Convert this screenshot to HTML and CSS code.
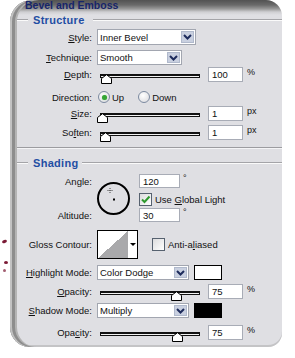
FILE: index.html
```html
<!DOCTYPE html>
<html>
<head>
<meta charset="utf-8">
<link rel="stylesheet" href="styles.css">
</head>
<body>
<div class="gutter">
  <span class="mark mark1"></span>
  <span class="mark mark2"></span>
  <span class="mark mark3"></span>
</div>
<div class="frame">
  <div class="title">Bevel and Emboss</div>

  <div class="legend"><span class="lead"></span><span class="ltext structure">Structure</span><span class="rest"></span></div>

  <div class="row r-style">
    <div class="lbl"><u>S</u>tyle:</div>
    <div class="select w-style"><span class="val">Inner Bevel</span><span class="btn"><svg width="9" height="6" viewBox="0 0 9 6"><path d="M1 1l3.5 3.5L8 1" fill="none" stroke="#1d2b5c" stroke-width="2"/></svg></span></div>
  </div>
  <div class="row r-tech">
    <div class="lbl"><u>T</u>echnique:</div>
    <div class="select w-tech"><span class="val">Smooth</span><span class="btn"><svg width="9" height="6" viewBox="0 0 9 6"><path d="M1 1l3.5 3.5L8 1" fill="none" stroke="#1d2b5c" stroke-width="2"/></svg></span></div>
  </div>
  <div class="row r-depth">
    <div class="lbl"><u>D</u>epth:</div>
    <div class="slider"><div class="track"></div><svg class="thumb" style="left:1px" width="11" height="10" viewBox="0 0 11 10"><path d="M0.5 4.5L5.5 0.7L10.5 4.5V9.5H0.5Z" fill="#fff" stroke="#000"/></svg></div>
    <div class="num">100</div><span class="unit">%</span>
  </div>
  <div class="row r-dir">
    <div class="lbl">Direction:</div>
    <span class="radio on"></span><span class="rtext">Up</span>
    <span class="radio r2"></span><span class="rtext">Down</span>
  </div>
  <div class="row r-size">
    <div class="lbl"><u>S</u>ize:</div>
    <div class="slider"><div class="track"></div><svg class="thumb" style="left:-3px" width="11" height="10" viewBox="0 0 11 10"><path d="M0.5 4.5L5.5 0.7L10.5 4.5V9.5H0.5Z" fill="#fff" stroke="#000"/></svg></div>
    <div class="num">1</div><span class="unit">px</span>
  </div>
  <div class="row r-soft">
    <div class="lbl">So<u>f</u>ten:</div>
    <div class="slider"><div class="track"></div><svg class="thumb" style="left:0px" width="11" height="10" viewBox="0 0 11 10"><path d="M0.5 4.5L5.5 0.7L10.5 4.5V9.5H0.5Z" fill="#fff" stroke="#000"/></svg></div>
    <div class="num">1</div><span class="unit">px</span>
  </div>

  <div class="sep"></div>

  <div class="legend l-shade"><span class="lead"></span><span class="ltext">Shading</span><span class="rest"></span></div>

  <div class="angle">
    <div class="lbl a1">An<u>g</u>le:</div>
    <div class="lbl a2">Altitude:</div>
    <svg class="dial" width="33" height="33" viewBox="0 0 33 33">
      <circle cx="16.5" cy="16.5" r="15.5" fill="none" stroke="#000" stroke-width="2"/>
      <rect x="16" y="16.5" width="2" height="2" fill="#000"/>
      <path d="M10.5 8.5h5M13 6v5" stroke="#444" stroke-width="1" stroke-dasharray="1 1"/>
    </svg>
    <div class="arow ar1"><div class="num n-ang">120</div><span class="deg">°</span></div>
    <div class="arow ar2"><span class="check"><svg width="11" height="11" viewBox="0 0 11 11"><path d="M2 5.5l2.5 2.5L9.5 2.5" fill="none" stroke="#2f9a2f" stroke-width="2"/></svg></span><span class="ctext">Use <u>G</u>lobal Light</span></div>
    <div class="arow ar3"><div class="num n-ang">30</div><span class="deg">°</span></div>
  </div>

  <div class="row r-gloss">
    <div class="lbl">Gloss Contour:</div>
    <div class="contour"><span class="curve"></span><span class="carrow"><svg width="6" height="3" viewBox="0 0 6 3"><path d="M0 0H6L3 3Z" fill="#000"/></svg></span></div>
    <span class="check c-aa"></span><span class="ctext">Anti-a<u>l</u>iased</span>
  </div>

  <div class="row r-hl">
    <div class="lbl"><u>H</u>ighlight Mode:</div>
    <div class="select w-mode"><span class="val">Color Dodge</span><span class="btn"><svg width="9" height="6" viewBox="0 0 9 6"><path d="M1 1l3.5 3.5L8 1" fill="none" stroke="#1d2b5c" stroke-width="2"/></svg></span></div>
    <span class="swatch white"></span>
  </div>
  <div class="row r-op1">
    <div class="lbl"><u>O</u>pacity:</div>
    <div class="slider"><div class="track"></div><svg class="thumb" style="left:71px" width="11" height="10" viewBox="0 0 11 10"><path d="M0.5 4.5L5.5 0.7L10.5 4.5V9.5H0.5Z" fill="#fff" stroke="#000"/></svg></div>
    <div class="num">75</div><span class="unit">%</span>
  </div>
  <div class="row r-sh">
    <div class="lbl"><u>S</u>hadow Mode:</div>
    <div class="select w-mode"><span class="val">Multiply</span><span class="btn"><svg width="9" height="6" viewBox="0 0 9 6"><path d="M1 1l3.5 3.5L8 1" fill="none" stroke="#1d2b5c" stroke-width="2"/></svg></span></div>
    <span class="swatch black"></span>
  </div>
  <div class="row r-op2">
    <div class="lbl">Opa<u>c</u>ity:</div>
    <div class="slider"><div class="track"></div><svg class="thumb" style="left:72px" width="11" height="10" viewBox="0 0 11 10"><path d="M0.5 4.5L5.5 0.7L10.5 4.5V9.5H0.5Z" fill="#fff" stroke="#000"/></svg></div>
    <div class="num">75</div><span class="unit">%</span>
  </div>
</div>
</body>
</html>
```
FILE: styles.css
```css
* { box-sizing: border-box; }
html, body { margin: 0; background: #fff; }
body {
  display: flex;
  width: 295px;
  height: 358px;
  overflow: hidden;
  font-family: "Liberation Sans", Arial, sans-serif;
  font-size: 9.5px;
  color: #111;
}
u { text-decoration: underline; text-underline-offset: 1px; }

.gutter { width: 10px; flex: none; }
.mark { display: block; background: #7b1a35; border-radius: 50%; }
.mark1 { width: 5px; height: 3px; margin: 240px 0 0 2px; transform: rotate(-20deg); }
.mark2 { width: 4px; height: 3px; margin: 18px 0 0 4px; }
.mark3 { width: 3px; height: 3px; margin: 5px 0 0 3px; opacity: 0.7; }

.frame {
  width: 272px;
  height: 347px;
  flex: none;
  border-radius: 22px 16px 14px 20px;
  background: linear-gradient(to bottom, #525252 0, #6a6a6a 5px, #9a9a9a 9px, #cfcfd2 12px, #dfdfe3 15px);
  box-shadow: inset 2px 0 0 #c2c2c2, inset 5px 0 0 #8d8d8d, inset 7px 0 0 #b4b4b4, inset 0 -2px 0 #c4c4c6;
  padding-left: 7px;
  overflow: hidden;
}

.title {
  height: 14px;
  padding-left: 8px;
  font-weight: bold;
  font-size: 10.5px;
  line-height: 11px;
  color: #17256a;
  white-space: nowrap;
}

.legend { display: flex; align-items: center; height: 12px; }
.legend .lead { width: 11px; }
.legend .lead, .legend .rest { height: 2px; border-top: 1px solid #a4a4a8; border-bottom: 1px solid #fafafa; }
.legend .rest { flex: 1; }
.ltext {
  padding: 0 8px 0 5px;
  font-weight: bold;
  font-size: 11px;
  letter-spacing: 0.3px;
  color: #1f4ea3;
}
.l-shade { margin-top: 8px; }
.l-shade .ltext { padding-right: 3px; }

.row { display: flex; align-items: center; height: 16px; }
.lbl { width: 75px; flex: none; margin-right: 5px; text-align: right; white-space: nowrap; }

.r-style { margin-top: 3px; }
.r-tech { margin-top: 5px; height: 15px; }
.r-depth { margin-top: 2px; height: 15px; }
.r-dir { margin-top: 7px; }
.r-size { margin-top: 1px; height: 15px; }
.r-soft { margin-top: 4px; height: 15px; }

.select {
  display: flex;
  height: 100%;
  background: #fff;
  border: 1px solid #a2a6b0;
  padding: 1px;
}
.select .val { flex: 1; display: flex; align-items: center; padding-left: 1px; white-space: nowrap; }
.btn {
  width: 13px;
  flex: none;
  background: #c9d0e0;
  border: 1px solid #b0b9cc;
  display: flex;
  align-items: center;
  justify-content: center;
}
.w-style { width: 99px; }
.w-tech { width: 85px; }
.w-mode { width: 92px; }

.slider { position: relative; width: 100px; height: 100%; margin-left: 3px; flex: none; }
.track { margin-top: 7px; height: 4px; background: #f2f2f2; border: 1px solid #111; border-top-width: 2px; }
.thumb { position: absolute; top: 7px; }

.num {
  width: 35px;
  height: 15px;
  flex: none;
  margin-left: 8px;
  background: #fff;
  border: 1px solid #a8acb6;
  padding-left: 3px;
  display: flex;
  align-items: center;
}
.unit { margin-left: 4px; align-self: flex-start; font-size: 9px; line-height: 10px; }

.radio {
  width: 12px;
  height: 12px;
  flex: none;
  border-radius: 50%;
  border: 1px solid #7c8aa0;
  background: radial-gradient(circle at 40% 35%, #fff, #d8d8dc);
  display: flex;
  align-items: center;
  justify-content: center;
  margin-left: 1px;
}
.radio.on::after { content: ""; width: 5px; height: 5px; border-radius: 50%; background: #35a535; box-shadow: 0 0 1px #7c7; }
.radio.r2 { margin-left: 14px; }
.rtext { margin-left: 2px; }

.sep { margin-top: 7px; height: 2px; border-top: 1px solid #9c9ca0; border-bottom: 1px solid #f4f4f6; }

.angle {
  display: grid;
  grid-template-columns: 80px 42px auto;
  grid-template-rows: 14px 20px 14px;
  margin-top: 5px;
}
.angle .lbl { display: flex; align-items: center; justify-content: flex-end; }
.a1 { grid-column: 1; grid-row: 1; }
.a2 { grid-column: 1; grid-row: 3; }
.dial { grid-column: 2; grid-row: 1 / 4; align-self: center; }
.arow { grid-column: 3; display: flex; align-items: center; }
.ar1 { grid-row: 1; }
.ar2 { grid-row: 2; align-self: end; margin-bottom: 2px; }
.ar3 { grid-row: 3; }
.n-ang { width: 41px; height: 14px; margin-left: 0; }
.deg { align-self: flex-start; margin-left: 3px; font-size: 9px; line-height: 8px; }

.check {
  width: 13px;
  height: 13px;
  flex: none;
  border: 1px solid #56616f;
  background: linear-gradient(135deg, #dcdcde, #fff);
  display: flex;
  align-items: center;
  justify-content: center;
}
.ctext { margin-left: 3px; white-space: nowrap; }

.r-gloss { margin-top: 8px; height: 29px; }
.contour { display: flex; width: 41px; height: 29px; border: 1px solid #000; background: #fff; }
.curve { width: 30px; height: 100%; background: linear-gradient(to bottom right, #fff 50%, #a9a9ab 50%); }
.carrow { flex: 1; display: flex; align-items: center; justify-content: center; }
.c-aa { margin-left: 14px; }

.r-hl { margin-top: 6px; height: 15px; }
.r-op1 { margin-top: 4px; height: 15px; }
.r-sh { margin-top: 4px; height: 15px; }
.r-op2 { margin-top: 7px; height: 15px; }

.swatch { width: 28px; height: 15px; margin-left: 5px; border: 1px solid #000; flex: none; }
.swatch.white { background: #fff; }
.swatch.black { background: #000; }
```
